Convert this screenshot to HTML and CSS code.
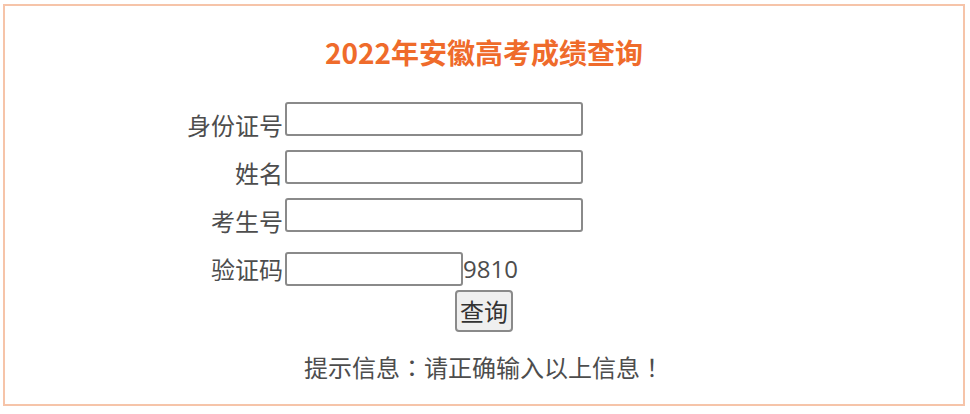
FILE: index.html
```html
<!DOCTYPE html>
<html lang="zh-CN">
  <head>
    <meta charset="UTF-8" />
    <title>2022年安徽高考成绩查询</title>
    <link rel="stylesheet" href="styles.css">
  </head>
  <body>
    <div class="query-box">
      <h2 class="title">2022年安徽高考成绩查询</h2>

      <form class="query-form">
        <div class="row">
          <label class="label" for="idcard">身份证号</label>
          <input id="idcard" class="field" type="text" />
        </div>
        <div class="row">
          <label class="label" for="name">姓名</label>
          <input id="name" class="field" type="text" />
        </div>
        <div class="row">
          <label class="label" for="examno">考生号</label>
          <input id="examno" class="field" type="text" />
        </div>
        <div class="row row-code">
          <label class="label" for="code">验证码</label>
          <input id="code" class="field field-code" type="text" />
          <span class="code-text">9810</span>
        </div>
        <div class="submit-row">
          <button type="button" class="submit">查询</button>
        </div>
      </form>

      <div class="tip">提示信息<span class="punct" lang="zh-TW">：</span>请正确输入以上信息<span class="punct" lang="zh-TW">！</span></div>
    </div>
  </body>
</html>
```

FILE: styles.css
```css
body {
  margin: 0;
  background: #fff;
  font-family: "Noto Sans CJK SC", "Noto Sans", sans-serif;
  color: #4d4d4d;
}

.query-box {
  margin: 4px 5px 0 3px;
  border: 2px solid #f6c4a9;
  padding: 26px 0 20px;
}

.title {
  margin: 0;
  text-align: center;
  color: #ef6b2b;
  font-size: 28px;
  font-weight: bold;
  line-height: 40px;
}

.query-form {
  margin: 30px 0 0;
}

.row {
  display: flex;
  align-items: flex-end;
  margin-bottom: 14px;
}

.row-code {
  align-items: center;
  margin-top: 20px;
  margin-bottom: 4px;
}

.label {
  width: 278px;
  text-align: right;
  font-size: 24px;
  line-height: 22px;
}

.row-code .label {
  line-height: 34px;
}

.field {
  box-sizing: border-box;
  width: 298px;
  height: 34px;
  margin: 0 0 0 2px;
  border: 2px solid #8a8a8a;
  border-radius: 3px;
  background: #fff;
  padding: 0 4px;
  font-size: 20px;
}

.field-code {
  width: 178px;
}

.code-text {
  font-size: 24px;
  line-height: 34px;
  font-family: "Open Sans", "Noto Sans", sans-serif;
}

.submit-row {
  text-align: center;
}

.submit {
  box-sizing: border-box;
  height: 42px;
  padding: 0 3px;
  background: #efefef;
  border: 2px solid #8a8a8a;
  border-radius: 4px;
  font-family: "Noto Sans CJK SC", sans-serif;
  font-size: 24px;
  line-height: 36px;
  color: #333;
}

.tip {
  margin-top: 18px;
  text-align: center;
  font-size: 24px;
  line-height: 34px;
}

/* full-width punctuation centred in its cell, as in the original */
.punct {
  font-family: "Noto Sans CJK TC", "Noto Sans CJK SC", sans-serif;
}
```
